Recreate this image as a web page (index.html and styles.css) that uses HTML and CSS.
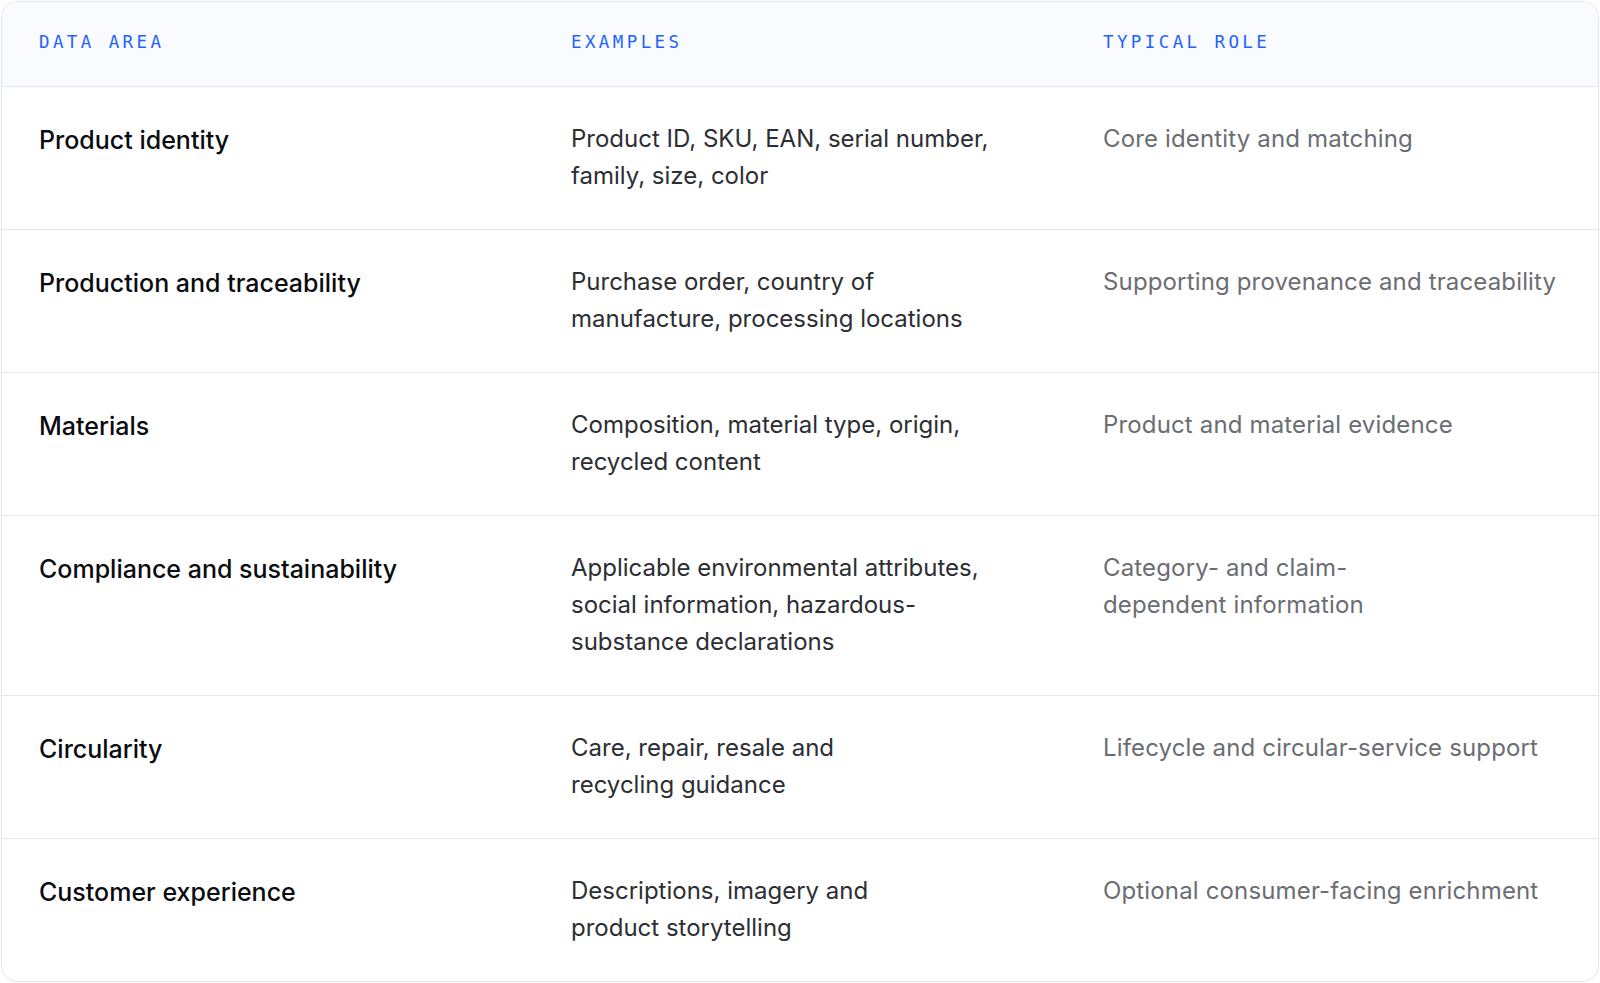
FILE: index.html
```html
<!DOCTYPE html>
<html lang="en">
<head>
<meta charset="utf-8">
<title>Data areas</title>
<link rel="stylesheet" href="styles.css">
</head>
<body>
<div class="table">
  <div class="row head">
    <div class="cell">Data area</div>
    <div class="cell">Examples</div>
    <div class="cell">Typical role</div>
  </div>
  <div class="row">
    <div class="cell area">Product identity</div>
    <div class="cell ex">Product ID, SKU, EAN, serial number,<br>family, size, color</div>
    <div class="cell role">Core identity and matching</div>
  </div>
  <div class="row">
    <div class="cell area">Production and traceability</div>
    <div class="cell ex">Purchase order, country of<br>manufacture, processing locations</div>
    <div class="cell role">Supporting provenance and traceability</div>
  </div>
  <div class="row">
    <div class="cell area">Materials</div>
    <div class="cell ex">Composition, material type, origin,<br>recycled content</div>
    <div class="cell role">Product and material evidence</div>
  </div>
  <div class="row">
    <div class="cell area">Compliance and sustainability</div>
    <div class="cell ex">Applicable environmental attributes,<br>social information, hazardous-<br>substance declarations</div>
    <div class="cell role">Category- and claim-<br>dependent information</div>
  </div>
  <div class="row">
    <div class="cell area">Circularity</div>
    <div class="cell ex">Care, repair, resale and<br>recycling guidance</div>
    <div class="cell role">Lifecycle and circular-service support</div>
  </div>
  <div class="row">
    <div class="cell area">Customer experience</div>
    <div class="cell ex">Descriptions, imagery and<br>product storytelling</div>
    <div class="cell role">Optional consumer-facing enrichment</div>
  </div>
</div>
</body>
</html>
```

FILE: styles.css
```css
* { box-sizing: border-box; }
html, body { margin: 0; padding: 0; background: #ffffff; }
body {
  padding: 1px;
  font-family: Inter, "Noto Sans", "DejaVu Sans", sans-serif;
}
.table {
  width: 1598px;
  border: 1px solid #e4e6ea;
  border-radius: 16px;
  overflow: hidden;
  background: #ffffff;
}
.row {
  display: grid;
  grid-template-columns: repeat(3, 1fr);
  border-top: 1px solid #e6e7ea;
}
.row.head {
  border-top: none;
  height: 84px;
  align-items: center;
  background: #f9fbfe;
}
.head .cell {
  padding: 0 37px 4px;
  font-family: "DejaVu Sans Mono", "Liberation Mono", monospace;
  font-size: 17.5px;
  letter-spacing: 3.4px;
  text-transform: uppercase;
  color: #1f63ff;
  line-height: 20px;
}
.cell {
  padding: 33px 37px 34.6px;
  font-size: 24px;
  line-height: 37.2px;
  white-space: nowrap;
}
.area {
  padding-top: 35px;
  padding-bottom: 32.6px;
  font-size: 25px;
  font-weight: 450;
  color: #0b0c0f;
}
.ex { color: #2c2e33; }
.role { color: #6b6d73; letter-spacing: 0.15px; }
```
